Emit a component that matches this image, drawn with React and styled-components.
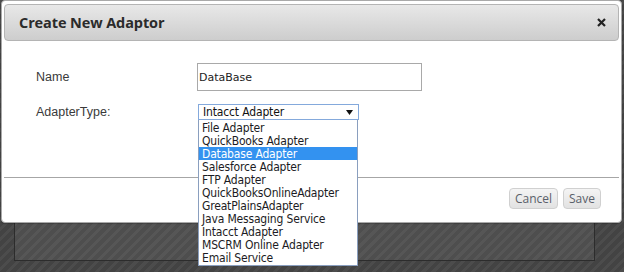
import React from "react";
import styled, { createGlobalStyle } from "styled-components";

const GlobalStyle = createGlobalStyle`
  html, body {
    margin: 0;
    padding: 0;
  }
  body {
    width: 624px;
    height: 272px;
    overflow: hidden;
    background-color: #444;
    background-image: repeating-linear-gradient(
      135deg,
      #4c4c4c 0px,
      #4c4c4c 3px,
      #434343 3px,
      #434343 7px
    );
    font-family: "Liberation Sans", Arial, sans-serif;
  }
`;

const Page = styled.div`
  position: relative;
  width: 624px;
  height: 272px;
  padding: 0 29px 0 14px;
  box-sizing: border-box;
`;

const Panel = styled.div`
  height: 261px;
  box-sizing: border-box;
  border: 1px solid #2c2c2c;
  border-top: none;
  background: rgba(255, 255, 255, 0.06);
`;

const Dialog = styled.div`
  position: absolute;
  top: 0;
  left: 1px;
  width: 621px;
  height: 223px;
  box-sizing: border-box;
  background: #fff;
  border: 1px solid #a9a9a9;
  border-radius: 4px;
  padding: 3px 2px 0 2px;
  display: flex;
  flex-direction: column;
  box-shadow: 0 1px 1px rgba(0, 0, 0, 0.2);
`;

const TitleBar = styled.div`
  height: 37px;
  box-sizing: border-box;
  border: 1px solid #b4b4b4;
  border-radius: 4px;
  background: linear-gradient(#e8e8e8, #cdcdcd);
  display: flex;
  align-items: center;
  justify-content: space-between;
  padding: 0 12px 0 14px;
`;

const Title = styled.span`
  font-family: "Open Sans", "Liberation Sans", sans-serif;
  font-weight: 700;
  font-size: 14.5px;
  color: #2b2b2b;
  letter-spacing: -0.1px;
`;

const CloseButton = styled.span`
  display: flex;
  width: 10px;
  height: 10px;
  align-items: center;
  justify-content: center;
`;

const Body = styled.div`
  height: 137px;
  box-sizing: border-box;
  padding: 22px 0 0 32px;
  border-bottom: 1px solid #a6a6a6;
  display: grid;
  grid-template-columns: 161px auto;
  grid-template-rows: 28px 16px;
  row-gap: 13px;
  align-content: start;
  align-items: center;
`;

const Label = styled.label`
  font-family: "Liberation Sans", Arial, sans-serif;
  font-size: 12.5px;
  color: #3a3a3a;
`;

const TextInput = styled.div`
  width: 225px;
  height: 28px;
  box-sizing: border-box;
  border: 1px solid #a9a9a9;
  display: flex;
  align-items: center;
  padding-left: 1px;
  font-family: "DejaVu Sans", Verdana, sans-serif;
  font-size: 11px;
  color: #222;
`;

const SelectWrap = styled.div`
  position: relative;
  width: 161px;
  margin-left: 1px;
`;

const SelectBox = styled.div`
  height: 16px;
  box-sizing: border-box;
  border: 1px solid #84a9dc;
  display: flex;
  align-items: center;
  justify-content: space-between;
  padding: 0 5px 0 4px;
  font-family: "DejaVu Sans", Verdana, sans-serif;
  font-stretch: condensed;
  font-size: 12px;
  letter-spacing: -0.15px;
  color: #111;
  background: #fff;
`;

const OptionList = styled.ul`
  position: absolute;
  top: 16px;
  left: 0;
  width: 160px;
  margin: 0;
  padding: 1px 0 1px 0;
  list-style: none;
  box-sizing: border-box;
  border: 1px solid #8a9fbf;
  border-top: none;
  background: #fff;
  z-index: 2;
`;

const Option = styled.li`
  height: 13px;
  line-height: 14px;
  padding-left: 3px;
  font-family: "DejaVu Sans", Verdana, sans-serif;
  font-stretch: condensed;
  font-size: 12px;
  letter-spacing: -0.17px;
  white-space: nowrap;
  color: ${(p) => (p.$selected ? "#fff" : "#1c1c24")};
  background: ${(p) => (p.$selected ? "#3392f0" : "transparent")};
`;

const Footer = styled.div`
  display: flex;
  justify-content: flex-end;
  gap: 5px;
  padding: 10px 18px 0 0;
`;

const Button = styled.button`
  height: 21px;
  box-sizing: border-box;
  padding: 0 5px;
  border: 1px solid #d0d0d0;
  border-radius: 4px;
  background: linear-gradient(#f4f4f4, #e2e2e2);
  font-family: "Open Sans", "Liberation Sans", sans-serif;
  font-size: 12px;
  color: #5a5f6a;
  cursor: pointer;
`;

const options = [
  "File Adapter",
  "QuickBooks Adapter",
  "Database Adapter",
  "Salesforce Adapter",
  "FTP Adapter",
  "QuickBooksOnlineAdapter",
  "GreatPlainsAdapter",
  "Java Messaging Service",
  "Intacct Adapter",
  "MSCRM Online Adapter",
  "Email Service",
];

export default function App() {
  return (
    <>
      <GlobalStyle />
      <Page>
        <Panel />
        <Dialog>
          <TitleBar>
            <Title>Create New Adaptor</Title>
            <CloseButton>
              <svg width="9" height="9" viewBox="0 0 9 9">
                <path d="M1 1 L8 8 M8 1 L1 8" stroke="#222" strokeWidth="2.2" strokeLinecap="butt" />
              </svg>
            </CloseButton>
          </TitleBar>
          <Body>
            <Label>Name</Label>
            <TextInput>DataBase</TextInput>
            <Label>AdapterType:</Label>
            <SelectWrap>
              <SelectBox>
                <span>Intacct Adapter</span>
                <svg width="7" height="5" viewBox="0 0 7 5">
                  <path d="M0 0 L7 0 L3.5 5 Z" fill="#111" />
                </svg>
              </SelectBox>
              <OptionList>
                {options.map((o) => (
                  <Option key={o} $selected={o === "Database Adapter"}>
                    {o}
                  </Option>
                ))}
              </OptionList>
            </SelectWrap>
          </Body>
          <Footer>
            <Button>Cancel</Button>
            <Button>Save</Button>
          </Footer>
        </Dialog>
      </Page>
    </>
  );
}
